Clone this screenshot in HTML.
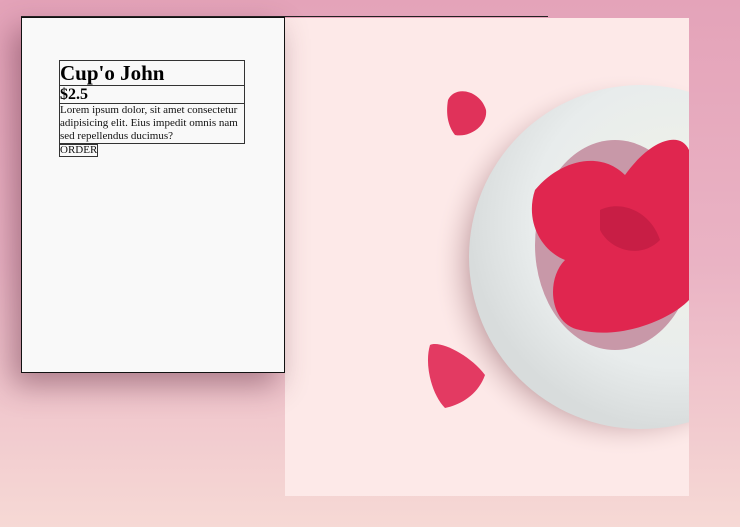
<!DOCTYPE html>
<html><head><style>
html,body{margin:0;padding:0;width:740px;height:527px;overflow:hidden;background:linear-gradient(180deg,#e4a3b9 0%,#eab3c4 50%,#f6d9d5 100%);font-family:"Liberation Serif",serif;}
.topline{position:absolute;left:21px;top:16px;width:527px;height:1px;background:#222;}
.card{position:absolute;left:21px;top:17px;width:262px;height:354px;background:#f9f9f9;border:1px solid #111;box-shadow:-8px 12px 28px rgba(90,40,60,.45);}
.inner{position:absolute;left:37px;top:42px;width:186px;}
h1{margin:0;font-size:21px;line-height:24px;border:1px solid #333;font-weight:bold;}
h2{margin:0;font-size:16px;line-height:17px;border:1px solid #333;border-top:none;font-weight:bold;}
p{margin:0;font-size:11px;line-height:13px;border:1px solid #333;border-top:none;color:#111;}
button{display:block;margin:0;padding:0;font-family:"Liberation Serif",serif;font-size:11px;line-height:11px;background:transparent;border:1px solid #333;color:#111;}
.img{position:absolute;left:285px;top:18px;width:404px;height:478px;background:#fde9e8;overflow:hidden;}
</style></head><body>
<div class="topline"></div>
<div class="img">
<svg width="404" height="478" viewBox="285 18 404 478">
<defs>
<radialGradient id="sh" cx="0.5" cy="0.5" r="0.5"><stop offset="0.72" stop-color="#906068" stop-opacity="0.8"/><stop offset="1" stop-color="#fde9e8" stop-opacity="0"/></radialGradient>
<radialGradient id="pl" cx="0.6" cy="0.4" r="0.6"><stop offset="0" stop-color="#f2f4e8"/><stop offset="0.7" stop-color="#e8ecec"/><stop offset="1" stop-color="#d8dcdc"/></radialGradient>
</defs>
<circle cx="625" cy="265" r="192" fill="url(#sh)"/>
<circle cx="641" cy="257" r="172" fill="url(#pl)"/>
<ellipse cx="615" cy="245" rx="80" ry="105" fill="#c898a8"/>
<path d="M535 190 C560 160 600 150 625 175 C650 140 680 130 689 150 L689 300 C670 320 620 340 580 330 C550 325 545 280 565 260 C540 250 525 220 535 190Z" fill="#e0264f"/>
<path d="M600 210 C620 200 650 210 660 240 C640 260 610 250 600 230Z" fill="#c81e45"/>
<path d="M448 100 C455 85 480 90 486 110 C488 125 470 138 455 135 C447 125 446 112 448 100Z" fill="#e0325a"/>
<path d="M430 345 C440 340 470 355 485 375 C478 395 460 405 445 408 C432 395 424 365 430 345Z" fill="#e33a62"/>
</svg>
</div>
<div class="card">
<div class="inner">
<h1>Cup'o John</h1>
<h2>$2.5</h2>
<p>Lorem ipsum dolor, sit amet consectetur adipisicing elit. Eius impedit omnis nam sed repellendus ducimus?</p>
<button>ORDER</button>
</div>
</div>
</body></html>
